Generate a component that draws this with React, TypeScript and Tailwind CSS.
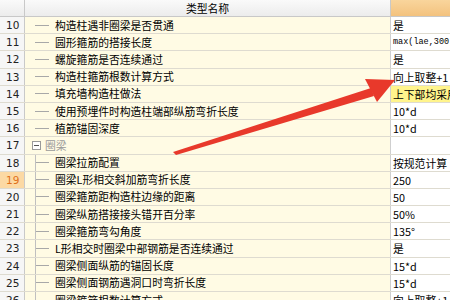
import React from "react";

type Row = {
  no: number;
  name: string;
  value: string;
  group?: boolean;
  selected?: boolean;
  highlight?: boolean;
  mono?: boolean;
};

const rows: Row[] = [
  { no: 10, name: "构造柱遇非圈梁是否贯通", value: "是" },
  { no: 11, name: "圆形箍筋的搭接长度", value: "max(lae,300)", mono: true },
  { no: 12, name: "螺旋箍筋是否连续通过", value: "是" },
  { no: 13, name: "构造柱箍筋根数计算方式", value: "向上取整+1" },
  { no: 14, name: "填充墙构造柱做法", value: "上下部均采用植筋", highlight: true },
  { no: 15, name: "使用预埋件时构造柱端部纵筋弯折长度", value: "10*d" },
  { no: 16, name: "植筋锚固深度", value: "10*d" },
  { no: 17, name: "圈梁", value: "", group: true },
  { no: 18, name: "圈梁拉筋配置", value: "按规范计算" },
  { no: 19, name: "圈梁L形相交斜加筋弯折长度", value: "250", selected: true },
  { no: 20, name: "圈梁箍筋距构造柱边缘的距离", value: "50" },
  { no: 21, name: "圈梁纵筋搭接接头错开百分率", value: "50%" },
  { no: 22, name: "圈梁箍筋弯勾角度", value: "135°" },
  { no: 23, name: "L形相交时圈梁中部钢筋是否连续通过", value: "是" },
  { no: 24, name: "圈梁侧面纵筋的锚固长度", value: "15*d" },
  { no: 25, name: "圈梁侧面钢筋遇洞口时弯折长度", value: "15*d" },
  { no: 26, name: "圈梁箍筋根数计算方式", value: "向上取整+1" },
];

const cjk = "font-['SimSun','Noto_Sans_CJK_SC',sans-serif]";

function TableRow({ row }: { row: Row }) {
  return (
    <div className="flex h-[17.2px] shrink-0 border-b border-[#dedbd0]">
      <div
        className={`w-[25px] shrink-0 border-r border-[#c9c9c9] pl-[6px] text-[10.5px] leading-[17px] font-['DejaVu_Sans',sans-serif] ${
          row.selected ? "bg-[#fcd9a4] text-[#e0701a]" : "bg-[#f6f6f6] text-[#222]"
        }`}
      >
        {row.no}
      </div>
      <div className="relative w-[366px] shrink-0 bg-[#fffbe4] border-r border-[#cfcfcf]">
        {row.group ? (
          <div className="flex h-full items-center pl-[7px] gap-[4px]">
            <div className="flex h-[9px] w-[9px] items-center justify-center border border-[#9a9a9a] bg-white">
              <div className="h-px w-[5px] bg-[#555]" />
            </div>
            <span className={`${cjk} text-[10.8px] text-[#9a9a9a] leading-[17px]`}>{row.name}</span>
          </div>
        ) : (
          <div className="flex h-full items-center">
            <div className="ml-[10px] h-px w-[14px] bg-[#a8a8a8]" />
            <span className={`${cjk} ml-[6px] text-[10.8px] text-black leading-[17px] whitespace-nowrap`}>
              {row.name}
            </span>
          </div>
        )}
        {row.no > 17 && (
          <div className="absolute left-[10px] top-0 h-full w-px bg-[#c0c0c0]" />
        )}
      </div>
      <div
        className={`flex-1 overflow-hidden whitespace-nowrap pl-[2px] leading-[17px] ${
          row.highlight ? "bg-[#fff48c]" : "bg-white"
        } ${
          row.mono
            ? "font-['Liberation_Mono',monospace] text-[8.5px]"
            : `${cjk} text-[10.8px]`
        } text-black`}
      >
        {row.value}
      </div>
    </div>
  );
}

export default function App() {
  return (
    <div className="relative w-[450px] h-[300px] overflow-hidden bg-white">
      <div className="flex h-[17px] border-b border-[#c8c8c8]">
        <div className="w-[25px] shrink-0 border-r border-[#c9c9c9] bg-gradient-to-b from-[#fafafa] to-[#ececec]" />
        <div
          className={`w-[366px] shrink-0 border-r border-[#c9c9c9] bg-gradient-to-b from-[#fafafa] to-[#ececec] text-center text-[10.8px] leading-[16px] text-black ${cjk}`}
        >
          类型名称
        </div>
        <div className="flex-1 bg-gradient-to-b from-[#f9d59c] to-[#f3c27e]" />
      </div>
      <div className="flex flex-col">
        {rows.map((r) => (
          <TableRow key={r.no} row={r} />
        ))}
      </div>
      <svg className="absolute left-0 top-0" width="450" height="300" viewBox="0 0 450 300">
        <polygon points="173,152 176,155 374,96 371,88" fill="#e8392b" />
        <polygon points="395,80 365,79 377,102" fill="#e8392b" />
      </svg>
    </div>
  );
}
